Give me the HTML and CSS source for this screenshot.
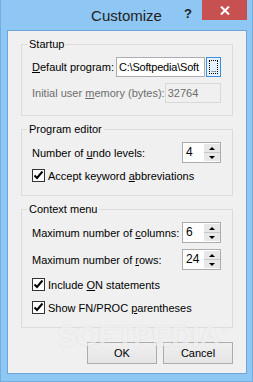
FILE: index.html
```html
<!DOCTYPE html>
<html lang="en">
<head>
    <meta charset="UTF-8">
    <title>Customize</title>
    <link rel="stylesheet" href="styles.css">
</head>
<body>

<div class="window">
    <div class="titlebar">
        <span class="title">Customize</span>
        <div class="caption-buttons">
            <span class="help">?</span>
            <span class="close">
                <svg width="10" height="9" viewBox="0 0 10 9"><path d="M1 0.5 L9 8.5 M9 0.5 L1 8.5" stroke="#fff" stroke-width="2"/></svg>
            </span>
        </div>
    </div>

    <div class="client">
        <fieldset class="group">
            <legend>Startup</legend>
            <div class="row">
                <span class="label"><u>D</u>efault program:</span>
                <span class="field path">C:\Softpedia\Soft</span>
                <span class="browse"><span class="focus">...</span></span>
            </div>
            <div class="row">
                <span class="label disabled">Initial user <u>m</u>emory (bytes):</span>
                <span class="field memory">32764</span>
            </div>
        </fieldset>

        <fieldset class="group">
            <legend>Program editor</legend>
            <div class="row spin-row">
                <span class="label">Number of <u>u</u>ndo levels:</span>
                <div class="spin">
                    <span class="spin-value">4</span>
                    <span class="spin-buttons"><span class="up"><i></i></span><span class="down"><i></i></span></span>
                </div>
            </div>
            <div class="check first">
                <span class="box"><svg width="11" height="11" viewBox="0 0 11 11"><path d="M1.5 5.5 L4 8 L9.5 1.5" fill="none" stroke="#000" stroke-width="2"/></svg></span>
                <span>Accept keyword <u>a</u>bbreviations</span>
            </div>
        </fieldset>

        <fieldset class="group">
            <legend>Context menu</legend>
            <div class="row spin-row">
                <span class="label">Maximum number of <u>c</u>olumns:</span>
                <div class="spin">
                    <span class="spin-value">6</span>
                    <span class="spin-buttons"><span class="up"><i></i></span><span class="down"><i></i></span></span>
                </div>
            </div>
            <div class="row spin-row">
                <span class="label">Maximum number of <u>r</u>ows:</span>
                <div class="spin">
                    <span class="spin-value">24</span>
                    <span class="spin-buttons"><span class="up"><i></i></span><span class="down"><i></i></span></span>
                </div>
            </div>
            <div class="check second">
                <span class="box"><svg width="11" height="11" viewBox="0 0 11 11"><path d="M1.5 5.5 L4 8 L9.5 1.5" fill="none" stroke="#000" stroke-width="2"/></svg></span>
                <span>Include <u>O</u>N statements</span>
            </div>
            <div class="check">
                <span class="box"><svg width="11" height="11" viewBox="0 0 11 11"><path d="M1.5 5.5 L4 8 L9.5 1.5" fill="none" stroke="#000" stroke-width="2"/></svg></span>
                <span>Show FN/PROC <u>p</u>arentheses</span>
            </div>
        </fieldset>

        <div class="actions">
            <button>OK</button>
            <button>Cancel</button>
        </div>

        <div class="watermark">SOFTPEDIA<sup>&reg;</sup></div>
    </div>
</div>

</body>
</html>
```

FILE: styles.css
```css
body {
    margin: 0;
    font-family: "Liberation Sans", Arial, sans-serif;
    font-size: 11px;
    color: #000;
}
.window {
    width: 253px;
    height: 382px;
    box-sizing: border-box;
    background: #8ec6f4;
    border: 1px solid #74ade2;
    border-top: 0;
    display: flex;
    flex-direction: column;
}
.titlebar {
    height: 30px;
    display: grid;
    grid-template-columns: 1fr auto 1fr;
}
.title {
    grid-column: 2;
    align-self: center;
    font-size: 15px;
    color: #222;
    margin-top: 1px;
}
.caption-buttons {
    grid-column: 3;
    justify-self: end;
    display: flex;
    align-items: flex-start;
    padding-right: 5px;
}
.help {
    font-weight: bold;
    font-size: 13px;
    color: #222;
    margin-top: 6px;
    margin-right: 10px;
}
.close {
    width: 45px;
    height: 20px;
    background: #c75050;
    display: flex;
    align-items: center;
    justify-content: center;
}
.client {
    flex: 1;
    margin: 0 5px 7px 6px;
    padding: 6px 13px 0;
    background: #f0f0f0;
    border: 1px solid #6ba5da;
    position: relative;
    display: flex;
    flex-direction: column;
    gap: 6px;
    overflow: hidden;
}
.group {
    margin: 0;
    padding: 6px 11px 12px 10px;
    border: 1px solid #dcdcdc;
    min-width: 0;
}
.group legend {
    padding: 0 2px;
    margin-left: -5px;
    line-height: 14px;
}
.row {
    display: flex;
    align-items: center;
    height: 20px;
}
.row + .row {
    margin-top: 6px;
}
.spin-row {
    height: 21px;
}
.label {
    flex: 1;
    white-space: nowrap;
}
.disabled {
    color: #6d6d6d;
}
.field {
    height: 20px;
    box-sizing: border-box;
    border: 1px solid #abadb3;
    background: #fff;
    padding: 0 2px;
    line-height: 18px;
    overflow: hidden;
    white-space: nowrap;
}
.path {
    width: 89px;
    letter-spacing: -0.2px;
}
.memory {
    width: 60px;
    border-color: #d9d9d9;
    background: #f0f0f0;
    color: #6d6d6d;
}
.browse {
    width: 15px;
    height: 20px;
    box-sizing: border-box;
    margin-left: 1px;
    border: 1px solid #3c8fe0;
    background: #e5f1fb;
    padding: 2px;
    display: flex;
}
.focus {
    flex: 1;
    border: 1px dotted #000;
    font-size: 8px;
    line-height: 7px;
    display: flex;
    align-items: flex-end;
    justify-content: center;
    letter-spacing: -0.5px;
}
.spin {
    width: 39px;
    height: 21px;
    box-sizing: border-box;
    border: 1px solid #abadb3;
    background: #fff;
    display: flex;
}
.spin-value {
    flex: 1;
    padding-left: 3px;
    line-height: 19px;
    font-size: 12px;
}
.spin-buttons {
    width: 16px;
    margin: 1px 0;
    display: flex;
    flex-direction: column;
    gap: 1px;
    background: #c9c9c9;
}
.spin-buttons span {
    flex: 1;
    background: #e8e8e8;
    display: flex;
    align-items: center;
    justify-content: center;
}
.up i {
    border-left: 3px solid transparent;
    border-right: 3px solid transparent;
    border-bottom: 3px solid #000;
}
.down i {
    border-left: 3px solid transparent;
    border-right: 3px solid transparent;
    border-top: 3px solid #000;
}
.check {
    display: flex;
    align-items: center;
    gap: 3px;
    height: 15px;
    margin-top: 8px;
}
.check.first {
    margin-top: 5px;
}
.check.second {
    margin-top: 7px;
}
.box {
    width: 13px;
    height: 13px;
    box-sizing: border-box;
    border: 1px solid #333;
    background: #fff;
    display: flex;
}
.actions {
    display: flex;
    justify-content: flex-end;
    gap: 6px;
    margin-top: 8px;
}
button {
    width: 70px;
    height: 22px;
    padding: 0;
    font-family: inherit;
    font-size: 11px;
    color: #000;
    background: linear-gradient(#f0f0f0, #e5e5e5);
    border: 1px solid #acacac;
}
.watermark {
    position: absolute;
    left: 49px;
    top: 294px;
    font-size: 30px;
    font-weight: bold;
    line-height: 22px;
    letter-spacing: -1px;
    color: rgba(255, 255, 255, 0.6);
    text-shadow: 0 0 2px rgba(0, 0, 0, 0.1);
    pointer-events: none;
}
.watermark sup {
    font-size: 10px;
    line-height: 10px;
    vertical-align: top;
    margin-left: 2px;
}
```
